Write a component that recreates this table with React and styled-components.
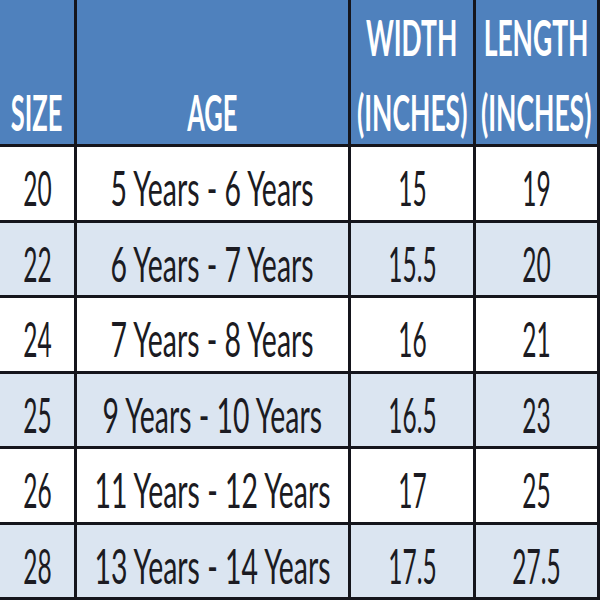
import React from 'react';
import styled, { createGlobalStyle } from 'styled-components';

const GlobalStyle = createGlobalStyle`
  html, body {
    margin: 0;
    padding: 0;
    background: #ffffff;
  }
`;

const Chart = styled.div`
  width: 600px;
  height: 600px;
  box-sizing: border-box;
  display: grid;
  grid-template-columns: 74px 271px 122px 121px;
  grid-template-rows: 144px repeat(6, 1fr);
  gap: 3px;
  padding: 0 3px 3px 0;
  background: #15151c;
  font-family: Lato, 'Liberation Sans', sans-serif;
  overflow: hidden;
`;

const HeadCell = styled.div`
  background: #4f81bd;
  color: #ffffff;
  font-weight: 700;
  font-size: 49px;
  line-height: 75px;
  display: flex;
  flex-direction: column;
  align-items: center;
  padding-top: ${(p) => (p.$lines === 1 ? 75 : 0)}px;
  min-width: 0;
`;

const Cell = styled.div`
  background: ${(p) => (p.$shaded ? '#dbe5f1' : '#ffffff')};
  color: #1b1b22;
  font-size: 49px;
  display: flex;
  align-items: center;
  justify-content: center;
  padding-top: 8px;
  box-sizing: border-box;
  min-width: 0;
`;

const Squeeze = styled.span`
  display: inline-block;
  white-space: nowrap;
  transform: scaleX(${(p) => p.$x || 0.55});
  transform-origin: center;
`;

const rows = [
  ['20', '5 Years - 6 Years', '15', '19'],
  ['22', '6 Years - 7 Years', '15.5', '20'],
  ['24', '7 Years - 8 Years', '16', '21'],
  ['25', '9 Years - 10 Years', '16.5', '23'],
  ['26', '11 Years - 12 Years', '17', '25'],
  ['28', '13 Years - 14 Years', '17.5', '27.5'],
];

const App = () => (
  <>
    <GlobalStyle />
    <Chart>
      <HeadCell $lines={1}>
        <Squeeze $x={0.52}>SIZE</Squeeze>
      </HeadCell>
      <HeadCell $lines={1}>
        <Squeeze $x={0.52}>AGE</Squeeze>
      </HeadCell>
      <HeadCell $lines={2}>
        <Squeeze $x={0.54}>WIDTH</Squeeze>
        <Squeeze $x={0.54}>(INCHES)</Squeeze>
      </HeadCell>
      <HeadCell $lines={2}>
        <Squeeze $x={0.54}>LENGTH</Squeeze>
        <Squeeze $x={0.54}>(INCHES)</Squeeze>
      </HeadCell>
      {rows.map((row, i) =>
        row.map((val, j) => (
          <Cell key={`${i}-${j}`} $shaded={i % 2 === 1}>
            <Squeeze $x={j === 1 ? 0.58 : 0.5}>{val}</Squeeze>
          </Cell>
        ))
      )}
    </Chart>
  </>
);

export default App;
